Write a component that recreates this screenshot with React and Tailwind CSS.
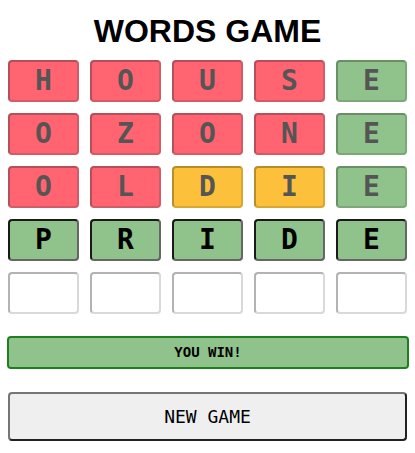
import React from "react";

const rows = [
  [["H","r"],["O","r"],["U","r"],["S","r"],["E","g"]],
  [["O","r"],["Z","r"],["O","r"],["N","r"],["E","g"]],
  [["O","r"],["L","r"],["D","y"],["I","y"],["E","g"]],
  [["P","a"],["R","a"],["I","a"],["D","a"],["E","a"]],
  [["",""],["",""],["",""],["",""],["",""]],
];

const styles = {
  r: "bg-[#ff6470] border-t-[#b4505a] border-l-[#b4505a] border-b-[#cf5c67] border-r-[#cf5c67] text-[#555555]",
  g: "bg-[#90c38b] border-t-[#6a8f66] border-l-[#6a8f66] border-b-[#7ca877] border-r-[#7ca877] text-[#555555]",
  y: "bg-[#fdc03a] border-t-[#b68f2c] border-l-[#b68f2c] border-b-[#d6a833] border-r-[#d6a833] text-[#555555]",
  a: "bg-[#90c38b] border-t-[#1a1a1a] border-l-[#1a1a1a] border-b-[#666666] border-r-[#666666] text-black",
  "": "bg-white border-t-[#b3b3b3] border-l-[#b3b3b3] border-b-[#d9d9d9] border-r-[#d9d9d9] text-black",
};

export default function App() {
  return (
    <div className="w-[415px] h-[453px] bg-white px-2 pt-[13px] font-['DejaVu_Sans_Mono',monospace]">
      <h1 className="text-center text-[32px] leading-[37px] font-bold text-black font-['Liberation_Sans',Arial,sans-serif]">
        WORDS GAME
      </h1>
      <div className="mt-[10px] grid grid-cols-5 gap-[11px]">
        {rows.flat().map(([ch, s], i) => (
          <div
            key={i}
            className={`h-[42px] rounded-[4px] border-2 flex items-center justify-center text-[28px] font-bold ${styles[s]}`}
          >
            {ch}
          </div>
        ))}
      </div>
      <div className="mt-[22px] ml-[-1px] w-[402px] h-[33px] rounded-[4px] border-2 border-[#1f7f1f] bg-[#90c38b] flex items-center justify-center text-[14px] font-bold text-black">
        YOU WIN!
      </div>
      <button className="mt-[23px] w-[399px] h-[49px] rounded-[4px] border-2 border-t-[#767676] border-l-[#767676] border-b-[#222222] border-r-[#222222] bg-[#efefef] flex items-center justify-center text-[18px] text-black">
        NEW GAME
      </button>
    </div>
  );
}
